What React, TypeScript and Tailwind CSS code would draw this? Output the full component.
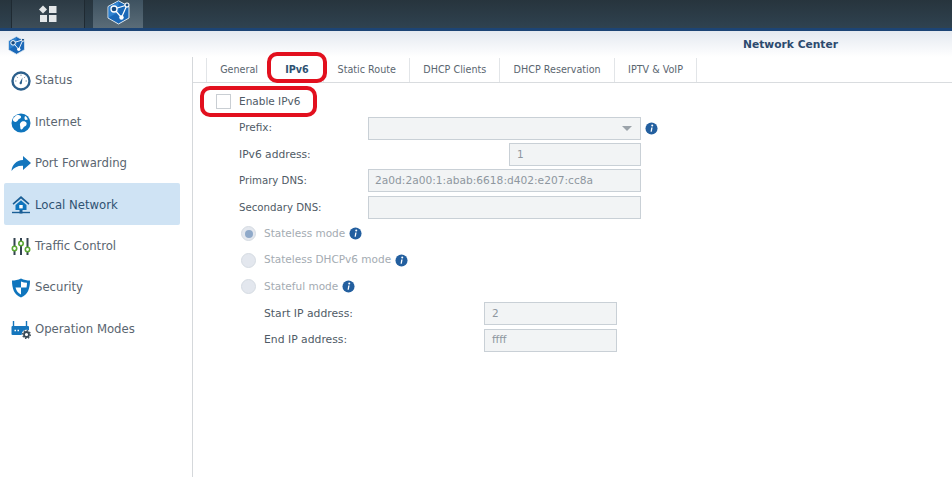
import type { ReactNode } from "react";

function NetworkIcon({ size }: { size: number }) {
  return (
    <svg viewBox="0 0 24 25" width={size} height={size} aria-hidden>
      <path d="M12 .8L22.500 6.500V18L12 24 1.500 18V6.500z" fill="#1a68b8" stroke="#dfe8ef" strokeWidth="1" />
      <path d="M2.200 7L12 1.500V12L2.200 17.500z" fill="#2f82d0" />
      <path d="M7.500 9L20.500 5M7.500 9L15 17.500M20.500 5L15 17.500" stroke="#fff" strokeWidth="1.200" fill="none" />
      <circle cx="7.500" cy="9" r="3" fill="#174a80" stroke="#fff" strokeWidth="1.300" />
      <circle cx="20.500" cy="5" r="2" fill="#174a80" stroke="#fff" strokeWidth="1.100" />
      <circle cx="15" cy="17.500" r="2.200" fill="#fff" />
    </svg>
  );
}

function StatusIcon() {
  return (
    <svg viewBox="0 0 20 20" width="20" height="20" aria-hidden>
      <circle cx="10" cy="10" r="8.500" fill="#fff" stroke="#2b5f8c" strokeWidth="2.400" />
      <path d="M10 3.500v1.500M4 10h1.500M14.500 10H16M5.800 5.800l1 1M14.200 5.800l-1 1" stroke="#7f95a8" strokeWidth="1" />
      <path d="M11.500 6.500l-.6 5.500a1.200 1.200 0 1 1-2-.8z" fill="#2b5f8c" />
    </svg>
  );
}

function GlobeIcon() {
  return (
    <svg viewBox="0 0 20 20" width="20" height="20" aria-hidden>
      <circle cx="10" cy="10" r="9.500" fill="#0f75bd" />
      <path d="M7 1.800c2 .5 3.500 1 3 2.700-.5 1.500-2.500 1-3 2.500S4.500 9.500 3 8.500 1.500 6 3 4.500 5.500 2 7 1.800zM11 8.500c2-.5 4 0 4.500 1.500s-.5 3-2 3.500-1.500 3-3 3-1-2.500-1.500-4 .5-3.500 2-4zM14 3c1.500.5 2.500 2 2.800 3.500l-2.300.5c-1-.5-1.500-2-.5-4z" fill="#fff" />
    </svg>
  );
}

function ForwardIcon() {
  return (
    <svg viewBox="0 0 20 20" width="20" height="20" aria-hidden>
      <path d="M12 2l8 7-8 7v-4.200C7 11.500 3 13.500.5 17 1 11 5 6.500 12 6z" fill="#1576bd" />
    </svg>
  );
}

function HomeIcon() {
  return (
    <svg viewBox="0 0 20 20" width="20" height="20" aria-hidden>
      <path d="M10 1L1.500 8.500l1 1.200L10 3.400l7.500 6.300 1-1.200z" fill="#1a5f96" />
      <path d="M4.500 10L10 5.300l5.500 4.700v5h-11z" fill="#0f75bd" />
      <rect x="8.300" y="10" width="3.400" height="3.400" fill="#fff" />
      <path d="M1 17.500h18" stroke="#1a5f96" strokeWidth="1.400" />
      <rect x="8.500" y="15" width="3" height="3.500" fill="#1a5f96" />
    </svg>
  );
}

function SlidersIcon() {
  return (
    <svg viewBox="0 0 20 20" width="20" height="20" fill="none" aria-hidden>
      <path d="M3.500 1v17M10 1v17M16.500 1v17" stroke="#33434f" strokeWidth="2" />
      <circle cx="3.500" cy="11.500" r="2.200" fill="#fff" stroke="#5aa832" strokeWidth="1.600" />
      <circle cx="10" cy="6.500" r="2.200" fill="#fff" stroke="#5aa832" strokeWidth="1.600" />
      <circle cx="16.500" cy="12.500" r="2.200" fill="#fff" stroke="#5aa832" strokeWidth="1.600" />
    </svg>
  );
}

function ShieldIcon() {
  return (
    <svg viewBox="0 0 20 20" width="20" height="20" aria-hidden>
      <path d="M10 .5c3 1.500 6 2 9 2 0 8-2 14-9 17-7-3-9-9-9-17 3 0 6-.5 9-2z" fill="#0f75bd" />
      <path d="M10 3.500c2 .8 4 1.200 6 1.300 0 1.600-.2 3.200-.5 4.700H10zM10 9.500v7C7 15 5.300 12.700 4.500 9.500z" fill="#fff" />
    </svg>
  );
}

function RouterIcon() {
  return (
    <svg viewBox="0 0 20 20" width="20" height="20" aria-hidden>
      <path d="M2.500 1v6M15.500 1v6" stroke="#1576bd" strokeWidth="1.400" />
      <rect x="0.500" y="6" width="17.500" height="9" rx="1" fill="#1576bd" />
      <path d="M3.500 10.500h1.500M6.500 10.500H8" stroke="#fff" strokeWidth="1.400" />
      <circle cx="15.500" cy="14.500" r="4.800" fill="#fff" />
      <circle cx="15.500" cy="14.500" r="2.500" fill="none" stroke="#3a4a56" strokeWidth="1.800" />
      <circle cx="15.500" cy="14.500" r="3.900" fill="none" stroke="#3a4a56" strokeWidth="1.200" strokeDasharray="1.500 1.500" />
    </svg>
  );
}

function InfoIcon() {
  return (
    <svg viewBox="0 0 14 14" width="13" height="13" aria-hidden>
      <circle cx="7" cy="7" r="6.500" fill="#235f9f" />
      <circle cx="7.800" cy="3.800" r="1.100" fill="#fff" />
      <path d="M6.700 5.800h1.500L7.300 10.500h-1.300z" fill="#fff" />
    </svg>
  );
}

const navItems: { label: string; icon: ReactNode; active?: boolean }[] = [
  { label: "Status", icon: <StatusIcon /> },
  { label: "Internet", icon: <GlobeIcon /> },
  { label: "Port Forwarding", icon: <ForwardIcon /> },
  { label: "Local Network", icon: <HomeIcon />, active: true },
  { label: "Traffic Control", icon: <SlidersIcon /> },
  { label: "Security", icon: <ShieldIcon /> },
  { label: "Operation Modes", icon: <RouterIcon /> },
];

const tabs = ["General", "IPv6", "Static Route", "DHCP Clients", "DHCP Reservation", "IPTV & VoIP"];

function Field({ label, value }: { label: string; value?: string }) {
  return (
    <div className="flex h-[26.4px] items-center pl-[46px]">
      <span className="w-[129px] text-[10.2px] text-[#4f5b66]">{label}</span>
      <div className="flex h-[23px] w-[273px] items-center border border-[#c9d0d6] bg-[#f2f4f5] px-[6px] text-[10.65px] text-[#8e979f]">
        {value}
      </div>
    </div>
  );
}

function Radio({ label, checked }: { label: string; checked?: boolean }) {
  return (
    <div className="flex h-[26.4px] items-center pl-[48px]">
      <span className="mr-[8px] grid size-[15px] place-items-center rounded-full border border-[#d5dbe2] bg-[#e3e7ee]">
        {checked && <span className="size-[8px] rounded-full bg-[#8fa9c9]" />}
      </span>
      <span className="mr-[4px] text-[#a4abb2]">{label}</span>
      <InfoIcon />
    </div>
  );
}

function IpRow({ label, value }: { label: string; value: string }) {
  return (
    <div className="flex h-[26.4px] items-center pl-[71px]">
      <span className="w-[220px] text-[10.8px] text-[#4f5b66]">{label}</span>
      <div className="flex h-[23px] w-[133px] items-center border border-[#c9d0d6] bg-[#f2f4f5] px-[7px] text-[#8e979f]">
        {value}
      </div>
    </div>
  );
}

export default function App() {
  return (
    <div className="flex h-[477px] w-[952px] flex-col overflow-hidden bg-white font-['DejaVu_Sans',sans-serif] text-[10.5px]">
      {/* top bar */}
      <div className="flex h-[28px] shrink-0 bg-gradient-to-b from-[#27343d] to-[#2f4250]">
        <div className="ml-[11px] grid w-[74px] place-items-center border-x border-[#1f2a32] bg-gradient-to-b from-[#2c3a44] to-[#3d4d58]">
          <svg viewBox="0 0 20 18" width="20" height="18" aria-hidden>
            <path d="M5 0.500l4 4-4 4-4-4z" fill="#e4e7e9" />
            <rect x="11" y="1" width="7.500" height="7" fill="#e4e7e9" />
            <rect x="2" y="10" width="7" height="7" fill="#e4e7e9" />
            <rect x="11" y="10" width="7.500" height="7" fill="#e4e7e9" />
          </svg>
        </div>
        <div className="ml-[8px] flex w-[50px] justify-center bg-gradient-to-b from-[#3e5260] to-[#5a6c78]">
          <NetworkIcon size={25} />
        </div>
      </div>
      <div className="h-[3px] shrink-0 bg-[#1c4475]" />

      {/* window title */}
      <div className="flex h-[26px] shrink-0 items-center justify-between bg-gradient-to-b from-[#e4e9f0] to-white pl-[7px] pr-[114px]">
        <span className="mt-[2px]">
          <NetworkIcon size={19} />
        </span>
        <span className="mt-[2px] text-[10.7px] font-bold text-[#2c4a6e]">Network Center</span>
      </div>

      <div className="flex min-h-0 flex-1">
        {/* sidebar */}
        <div className="flex w-[193px] shrink-0 flex-col border-r border-[#d5d8db] pl-[4px] pr-[12px] pt-[2px]">
          {navItems.map((item) => (
            <div
              key={item.label}
              className={`flex h-[41.4px] items-center gap-[4px] rounded-[2px] pl-[6px] pt-[3px] text-[11.7px] ${item.active ? "bg-[#cfe3f4] text-[#2f5272]" : "text-[#5a6570]"}`}
            >
              <span className="grid size-[21px] shrink-0 place-items-center">{item.icon}</span>
              {item.label}
            </div>
          ))}
        </div>

        {/* content */}
        <div className="relative min-w-0 flex-1">
          <div className="flex h-[26px] items-stretch border-b border-[#d9dcdf] pl-[13px] pt-[1px] text-[9.6px] text-[#5b6670]">
            {tabs.map((tab) => (
              <div
                key={tab}
                className={`flex items-center border-l border-[#e2e5e8] px-[13.2px] last:border-r ${tab === "IPv6" ? "mr-[1.5px] border-l-0 pl-[14px] font-bold text-[#2f5272]" : ""}`}
              >
                {tab}
              </div>
            ))}
          </div>

          <div className="flex h-[32px] items-center gap-[8px] pl-[23px] pt-[5px]">
            <span className="size-[15px] border border-[#c9ced3] bg-white" />
            <span className="text-[#4f5b66]">Enable IPv6</span>
          </div>

          <div className="flex h-[26.4px] items-center pl-[46px]">
            <span className="w-[129px] text-[#4f5b66]">Prefix:</span>
            <div className="flex h-[23px] w-[273px] items-center justify-end border border-[#c9d0d6] bg-[#f2f4f5] pr-[8px]">
              <span className="h-0 w-0 border-x-[5px] border-t-[5px] border-x-transparent border-t-[#9ba3aa]" />
            </div>
            <span className="ml-[4px]">
              <InfoIcon />
            </span>
          </div>
          <div className="flex h-[26.4px] items-center pl-[46px]">
            <span className="w-[270px] text-[10.7px] text-[#4f5b66]">IPv6 address:</span>
            <div className="flex h-[23px] w-[132px] items-center border border-[#c9d0d6] bg-[#f2f4f5] px-[7px] text-[#8e979f]">1</div>
          </div>
          <Field label="Primary DNS:" value="2a0d:2a00:1:abab:6618:d402:e207:cc8a" />
          <Field label="Secondary DNS:" />

          <Radio label="Stateless mode" checked />
          <Radio label="Stateless DHCPv6 mode" />
          <Radio label="Stateful mode" />
          <div className="h-[1px]" />
          <IpRow label="Start IP address:" value="2" />
          <IpRow label="End IP address:" value="ffff" />

          {/* red annotations */}
          <div className="absolute left-[74px] top-[-5px] h-[31px] w-[60px] rounded-[10px] border-[4px] border-[#e2101e]" />
          <div className="absolute left-[7px] top-[29px] h-[31px] w-[117px] rounded-[10px] border-[4px] border-[#e2101e]" />
        </div>
      </div>
    </div>
  );
}
